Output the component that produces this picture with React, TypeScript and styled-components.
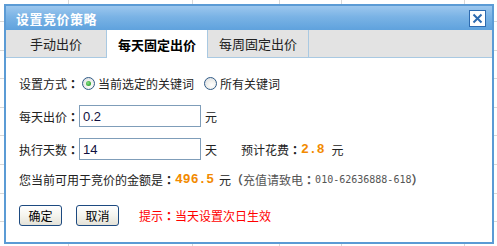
import React from "react";
import styled, { createGlobalStyle, css } from "styled-components";

const GlobalStyle = createGlobalStyle`
  html, body { margin: 0; padding: 0; }
  body {
    width: 497px;
    height: 246px;
    overflow: hidden;
    background-color: #fff;
    background-image:
      linear-gradient(to right, transparent 68px, #d8d8d8 68px, #d8d8d8 69px, transparent 69px),
      linear-gradient(to right, transparent 192px, #d8d8d8 192px, #d8d8d8 193px, transparent 193px),
      linear-gradient(to right, transparent 279px, #d8d8d8 279px, #d8d8d8 280px, transparent 280px),
      linear-gradient(to right, transparent 341px, #d8d8d8 341px, #d8d8d8 342px, transparent 342px),
      linear-gradient(to right, transparent 464px, #d8d8d8 464px, #d8d8d8 465px, transparent 465px),
      repeating-linear-gradient(to bottom, transparent 0, transparent 21px, #d8d8d8 21px, #d8d8d8 22px, transparent 22px, transparent 28.6px);
    font-family: "Noto Sans CJK SC", "Noto Sans", sans-serif;
    font-size: 12px;
    color: #222;
  }
`;

const Page = styled.div`
  padding: 4px 0 0 4px;
`;

const Dialog = styled.div`
  width: 490px;
  height: 240px;
  box-sizing: border-box;
  border: 2px solid #5b9bd5;
  background: #fff;
  display: flex;
  flex-direction: column;
`;

const TitleBar = styled.div`
  height: 24px;
  flex: none;
  display: flex;
  align-items: center;
  justify-content: space-between;
  padding: 0 6px 0 10px;
  background: linear-gradient(to bottom, #9cc7ee 0%, #7ab3e5 45%, #5fa2dd 100%);
  color: #fff;
  font-weight: bold;
  font-size: 13px;
  letter-spacing: 0.5px;
`;

const CloseButton = styled.button`
  width: 17px;
  height: 17px;
  padding: 0;
  margin: 0;
  box-sizing: border-box;
  border: 1px solid #2d6bb0;
  background: #fff;
  display: flex;
  align-items: center;
  justify-content: center;
  cursor: pointer;
`;

const TabBar = styled.div`
  height: 27px;
  flex: none;
  display: flex;
  background: #e3e3e3;
  border-bottom: 1px solid #a9c9e2;
`;

const Tab = styled.div<{ $active?: boolean }>`
  width: 101px;
  box-sizing: border-box;
  border-right: 1px solid #a9c9e2;
  display: flex;
  align-items: center;
  justify-content: center;
  font-size: 13px;
  color: #222;
  ${(p) =>
    p.$active &&
    css`
      background: #fff;
      font-weight: bold;
      margin-bottom: -1px;
      height: 28px;
      color: #000;
    `}
`;

const Body = styled.div`
  padding: 0 0 0 13px;
  display: flex;
  flex-direction: column;
`;

const Row = styled.div<{ $top: number; $h?: number }>`
  margin-top: ${(p) => p.$top}px;
  height: ${(p) => p.$h ?? 20}px;
  display: flex;
  align-items: center;
  white-space: nowrap;
  font-size: 12px;
`;

const Label = styled.span`
  color: #222;
`;

const Colon = styled.span`
  font-family: "Noto Sans CJK TC", "Noto Sans CJK SC", sans-serif;
  font-weight: bold;
`;

const RadioWrap = styled.label<{ $ml?: number }>`
  display: flex;
  align-items: center;
  margin-left: ${(p) => p.$ml ?? 0}px;
  cursor: pointer;
`;

const RadioCircle = styled.span<{ $checked?: boolean }>`
  width: 13px;
  height: 13px;
  box-sizing: border-box;
  border-radius: 50%;
  border: 1px solid #2f5a86;
  background: radial-gradient(circle at 60% 65%, #ffffff 0%, #f2f2ee 40%, #d3d8e0 100%);
  display: flex;
  align-items: center;
  justify-content: center;
  margin-right: 3px;
  flex: none;
  &::after {
    content: "";
    display: ${(p) => (p.$checked ? "block" : "none")};
    width: 5px;
    height: 5px;
    border-radius: 50%;
    background: radial-gradient(circle at 40% 40%, #8be08b 0%, #2fa52f 70%, #1f8a1f 100%);
  }
`;

const TextInput = styled.input`
  width: 122px;
  height: 22px;
  box-sizing: border-box;
  border: 1px solid #7f9db9;
  padding: 1px 3px 0;
  margin: 0 4px 0 0;
  font-family: "Liberation Sans", Arial, sans-serif;
  font-size: 13px;
  color: #101040;
  outline: none;
`;

const Unit = styled.span<{ $ml?: number }>`
  margin-left: ${(p) => p.$ml ?? 0}px;
  color: #222;
`;

const Amount = styled.span<{ $ml?: number; $mr?: number }>`
  font-family: "Liberation Mono", "Courier New", monospace;
  font-weight: bold;
  font-size: 13px;
  color: #f28a00;
  margin-left: ${(p) => p.$ml ?? 0}px;
  margin-right: ${(p) => p.$mr ?? 0}px;
`;

const Note = styled.span`
  color: #555;
  display: flex;
  align-items: center;
`;

const Phone = styled.span`
  font-family: "DejaVu Sans Mono", "Liberation Mono", monospace;
  font-size: 10px;
  color: #555;
`;

const Paren = styled.span`
  font-weight: bold;
  color: #555;
`;

const Button = styled.button<{ $ml?: number; $w: number }>`
  width: ${(p) => p.$w}px;
  height: 21px;
  box-sizing: border-box;
  margin: 0 0 0 ${(p) => p.$ml ?? 0}px;
  padding: 0;
  border: 1px solid #1d4a80;
  border-radius: 3px;
  background: linear-gradient(to bottom, #ffffff 0%, #f5f4ee 50%, #e4e2d8 100%);
  font-family: "Noto Sans CJK SC", sans-serif;
  font-size: 12px;
  color: #000;
  cursor: pointer;
`;

const Hint = styled.span`
  margin-left: 20px;
  color: #ff0000;
  font-size: 12px;
`;

const CloseIcon = () => (
  <svg width="11" height="11" viewBox="0 0 11 11">
    <path d="M1.5 1.5 L9.5 9.5 M9.5 1.5 L1.5 9.5" stroke="#2d6bb0" strokeWidth="2" fill="none" />
  </svg>
);

export default function App() {
  return (
    <>
      <GlobalStyle />
      <Page>
        <Dialog>
          <TitleBar>
            <span>设置竞价策略</span>
            <CloseButton aria-label="关闭">
              <CloseIcon />
            </CloseButton>
          </TitleBar>
          <TabBar>
            <Tab>手动出价</Tab>
            <Tab $active>每天固定出价</Tab>
            <Tab>每周固定出价</Tab>
          </TabBar>
          <Body>
            <Row $top={15}>
              <Label>设置方式<Colon>：</Colon></Label>
              <RadioWrap $ml={3}>
                <RadioCircle $checked />
                当前选定的关键词
              </RadioWrap>
              <RadioWrap $ml={10}>
                <RadioCircle />
                所有关键词
              </RadioWrap>
            </Row>
            <Row $top={12} $h={22}>
              <Label>每天出价<Colon>：</Colon></Label>
              <TextInput defaultValue="0.2" />
              <Unit>元</Unit>
            </Row>
            <Row $top={11} $h={22}>
              <Label>执行天数<Colon>：</Colon></Label>
              <TextInput defaultValue="14" />
              <Unit>天</Unit>
              <Unit $ml={24}>预计花费<Colon>：</Colon></Unit>
              <Amount $mr={7}>2.8</Amount>
              <Unit>元</Unit>
            </Row>
            <Row $top={9}>
              <Label>您当前可用于竞价的金额是<Colon>：</Colon></Label>
              <Amount $mr={5}>496.5</Amount>
              <Unit>元</Unit>
              <Note>
                <Paren>（</Paren>充值请致电<Colon>：</Colon><Phone>010-62636888-618</Phone>
                <Paren>）</Paren>
              </Note>
            </Row>
            <Row $top={16} $h={21}>
              <Button $w={43}>确定</Button>
              <Button $w={43} $ml={14}>取消</Button>
              <Hint>提示<Colon>：</Colon>当天设置次日生效</Hint>
            </Row>
          </Body>
        </Dialog>
      </Page>
    </>
  );
}
